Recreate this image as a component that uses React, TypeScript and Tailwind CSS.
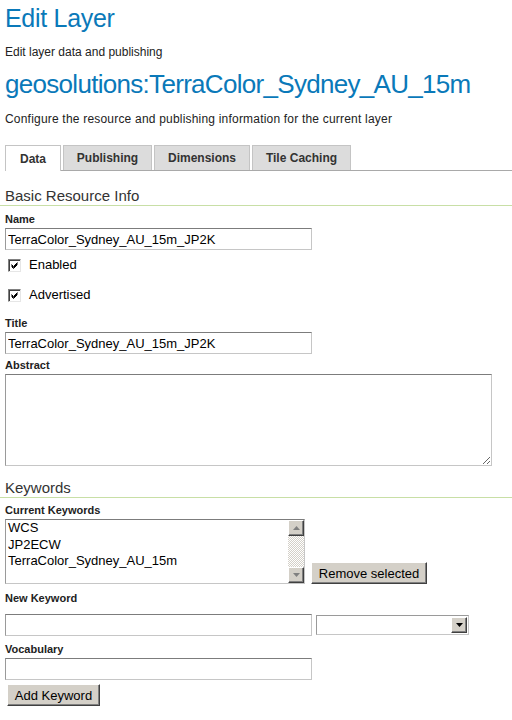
import React from "react";

const inputCls =
  "block h-[22px] bg-white border border-[#c6c6c6] border-t-[#7c7c7c] border-l-[#9a9a9a] px-[2px] text-[13px] text-black outline-none";

const btnCls =
  "h-[22px] bg-[#d4d0c8] border border-t-white border-l-white border-r-[#404040] border-b-[#404040] shadow-[inset_-1px_-1px_0_#808080] text-[13px] text-black leading-none px-[6px]";

const Label = ({ text, className = "" }: { text: string; className?: string }) => (
  <div className={`h-[14px] leading-[14px] text-[11px] font-bold text-[#222] ${className}`}>{text}</div>
);

const SectionHead = ({ text, className = "" }: { text: string; className?: string }) => (
  <div className={`-ml-[5px] pl-[5px] h-[19px] leading-[18px] text-[15px] text-[#333] border-b border-[#c8dfa6] ${className}`}>
    {text}
  </div>
);

const Checkbox = ({ label, className = "" }: { label: string; className?: string }) => (
  <label className={`flex items-center h-[20px] ${className}`}>
    <span className="ml-[3px] w-[13px] h-[13px] bg-white border border-t-[#808080] border-l-[#808080] border-r-[#e6e6e6] border-b-[#e6e6e6] shadow-[inset_1px_1px_0_#404040] flex items-center justify-center">
      <svg width="9" height="9" viewBox="0 0 9 9">
        <path d="M1.5 3.5 L3.5 5.5 L7.5 1.5 M1.5 4.5 L3.5 6.5 L7.5 2.5 M1.5 5.5 L3.5 7.5 L7.5 3.5" stroke="#000" strokeWidth="1" fill="none" />
      </svg>
    </span>
    <span className="ml-[8px] text-[13px] leading-[20px] text-black">{label}</span>
  </label>
);

const ArrowBtn = ({ dir }: { dir: "up" | "down" }) => (
  <div className="w-[16px] h-[16px] bg-[#d4d0c8] border border-t-white border-l-white border-r-[#404040] border-b-[#404040] shadow-[inset_-1px_-1px_0_#808080] flex items-center justify-center">
    <svg width="7" height="4" viewBox="0 0 7 4">
      {dir === "up" ? (
        <path d="M0 4 L3.5 0 L7 4 Z" fill="#808080" />
      ) : (
        <path d="M0 0 L7 0 L3.5 4 Z" fill="#808080" />
      )}
    </svg>
  </div>
);

const tabs = [
  { name: "Data", w: "w-[56px]", active: true },
  { name: "Publishing", w: "w-[89px]", active: false },
  { name: "Dimensions", w: "w-[96px]", active: false },
  { name: "Tile Caching", w: "w-[99px]", active: false },
];

export default function App() {
  return (
    <div className="w-[512px] min-h-[720px] bg-white pl-[5px] font-['Liberation_Sans',Arial,sans-serif] text-[#222]">
      <h1 className="h-[36px] leading-[36px] text-[25px] tracking-[-0.3px] text-[#0a79b9]">Edit Layer</h1>
      <p className="mt-[8px] h-[16px] leading-[16px] text-[12px]">Edit layer data and publishing</p>
      <h2 className="mt-[6px] h-[36px] leading-[36px] text-[26px] tracking-[-0.7px] text-[#0a79b9]">
        geosolutions:TerraColor_Sydney_AU_15m
      </h2>
      <p className="mt-[9px] h-[16px] leading-[16px] text-[12px] tracking-[0.2px]">
        Configure the resource and publishing information for the current layer
      </p>

      <div className="mt-[19px] flex items-end gap-[2px] h-[25px] border-b border-[#a9a9a9]">
        {tabs.map((t) => (
          <div
            key={t.name}
            className={`${t.w} h-[25px] flex items-center justify-center text-[12px] font-bold text-[#333] border border-b-0 ${
              t.active
                ? "bg-white border-[#c4c4c4] -mb-px h-[26px]"
                : "bg-[#dcdcdc] border-[#c4c4c4]"
            }`}
          >
            {t.name}
          </div>
        ))}
      </div>

      <SectionHead text="Basic Resource Info" className="mt-[16px]" />

      <Label text="Name" className="mt-[6px]" />
      <input className={`${inputCls} mt-[2px] w-[307px]`} defaultValue="TerraColor_Sydney_AU_15m_JP2K" />
      <Checkbox label="Enabled" className="mt-[5px]" />
      <Checkbox label="Advertised" className="mt-[10px]" />

      <Label text="Title" className="mt-[11px]" />
      <input className={`${inputCls} mt-[2px] w-[307px]`} defaultValue="TerraColor_Sydney_AU_15m_JP2K" />

      <Label text="Abstract" className="mt-[4px]" />
      <textarea className={`${inputCls} mt-[2px] w-[487px] h-[92px] resize`} />

      <SectionHead text="Keywords" className="mt-[13px]" />

      <Label text="Current Keywords" className="mt-[5px]" />
      <div className="mt-[2px] flex items-end gap-[6px]">
        <div className="w-[300px] h-[65px] bg-white border border-[#c6c6c6] border-t-[#7c7c7c] border-l-[#9a9a9a] flex">
          <ul className="flex-1 pl-[2px] text-[13px] leading-[16.5px] text-black">
            <li>WCS</li>
            <li>JP2ECW</li>
            <li>TerraColor_Sydney_AU_15m</li>
          </ul>
          <div className="w-[16px] flex flex-col bg-[repeating-conic-gradient(#d4d0c8_0%_25%,#ffffff_0%_50%)] bg-[length:2px_2px]">
            <ArrowBtn dir="up" />
            <div className="flex-1" />
            <ArrowBtn dir="down" />
          </div>
        </div>
        <button className={`${btnCls} w-[116px]`}>Remove selected</button>
      </div>

      <Label text="New Keyword" className="mt-[7px]" />
      <div className="mt-[9px] flex items-center gap-[4px]">
        <input className={`${inputCls} w-[307px]`} />
        <div className="w-[153px] h-[20px] bg-white border border-[#c6c6c6] border-t-[#9a9a9a] border-l-[#9a9a9a] flex justify-end items-center pr-px">
          <div className="w-[16px] h-[16px] bg-[#d4d0c8] border border-t-white border-l-white border-r-[#404040] border-b-[#404040] shadow-[inset_-1px_-1px_0_#808080] flex items-center justify-center">
            <svg width="7" height="4" viewBox="0 0 7 4">
              <path d="M0 0 L7 0 L3.5 4 Z" fill="#000" />
            </svg>
          </div>
        </div>
      </div>

      <Label text="Vocabulary" className="mt-[6px]" />
      <input className={`${inputCls} mt-[2px] w-[307px]`} />

      <button className={`${btnCls} mt-[4px] ml-[2px] w-[93px]`}>Add Keyword</button>
    </div>
  );
}
